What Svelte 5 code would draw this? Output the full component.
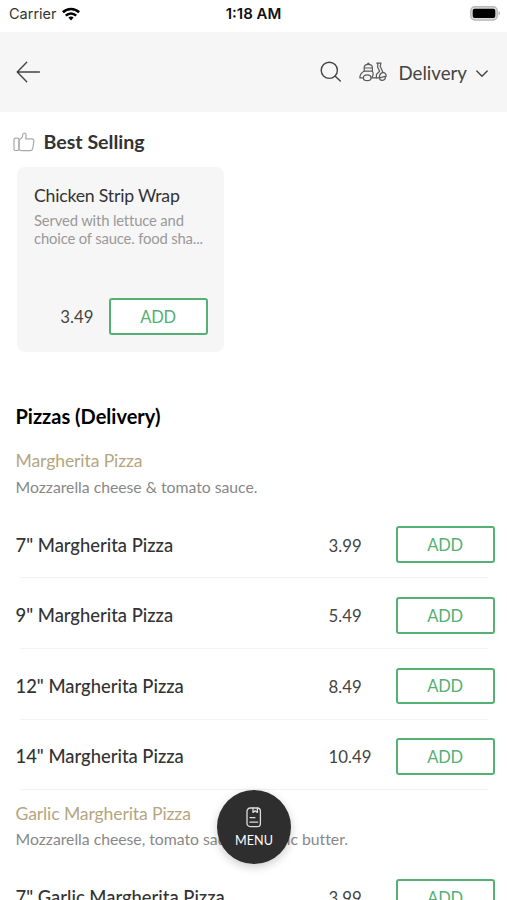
<script lang="ts">
  type Item = { name: string; price: string };
  type Group = { title: string; description: string; items: Item[] };

  let groups: Group[] = [
    {
      title: "Margherita Pizza",
      description: "Mozzarella cheese & tomato sauce.",
      items: [
        { name: '7" Margherita Pizza', price: "3.99" },
        { name: '9" Margherita Pizza', price: "5.49" },
        { name: '12" Margherita Pizza', price: "8.49" },
        { name: '14" Margherita Pizza', price: "10.49" },
      ],
    },
    {
      title: "Garlic Margherita Pizza",
      description: "Mozzarella cheese, tomato sauce & garlic butter.",
      items: [{ name: '7" Garlic Margherita Pizza', price: "3.99" }],
    },
  ];
</script>

<div class="screen">
  <div class="status">
    <div class="carrier">
      <span>Carrier</span>
      <svg width="18" height="14" viewBox="0 0 18 14" fill="none" stroke="#000" stroke-width="2.6">
        <path d="M0.9 5.2C5.5 0.9 12.5 0.9 17.1 5.2" />
        <path d="M3.8 8.6C6.8 5.7 11.2 5.7 14.2 8.6" />
        <path d="M6.4 10.6C7.9 9.2 10.1 9.2 11.6 10.6L9 13.4Z" fill="#000" stroke="none" />
      </svg>
    </div>
    <span class="time">1:18 AM</span>
    <svg class="battery" width="31" height="15" viewBox="0 0 31 15">
      <rect x="0.8" y="0.8" width="26.4" height="13.2" rx="4" fill="#ddd" stroke="#b8b8b8" stroke-width="1.4" />
      <rect x="2.7" y="2.7" width="22.6" height="9.4" rx="2" fill="#000" />
      <path d="M28.5 5.3C30.5 6 30.5 8.8 28.5 9.5Z" fill="#b3b3b3" />
    </svg>
  </div>

  <header>
    <button class="back" aria-label="Back">
      <svg width="26" height="24" viewBox="0 0 26 24" fill="none" stroke="#444" stroke-width="1.4" stroke-linecap="round" stroke-linejoin="round">
        <path d="M24.4 12H2.2M11.7 2.3L2.2 12L11.7 21.7" />
      </svg>
    </button>
    <button class="search" aria-label="Search">
      <svg width="22" height="22" viewBox="0 0 22 22" fill="none" stroke="#444" stroke-width="1.4" stroke-linecap="round">
        <circle cx="9.3" cy="9.3" r="8.1" />
        <path d="M15.2 15.2L20.3 20.1" />
      </svg>
    </button>
    <button class="mode">
      <svg width="28" height="20" viewBox="0 0 28 20" fill="none" stroke="#5a5a5a" stroke-width="1.2" stroke-linecap="round" stroke-linejoin="round">
        <path d="M5.2 9.2V5.8C5.2 3.6 6.6 2.4 9.3 2.4S13.4 3.6 13.4 5.8V9.2ZM5.2 6H13.4M8.2 2.2L9.3 1.2L10.4 2.2" />
        <path d="M5.2 9.2C2.4 10.4 0.9 12.8 0.9 15.9H4.4M13.4 9.2C14.6 11.4 14.2 13.9 12.4 15.9H20.4" />
        <path d="M4.4 15.9C4.4 11.8 12 11.8 12 15.9C12 19.4 4.4 19.4 4.4 15.9Z" />
        <path d="M17.8 1.2H22L21.2 4.2L24 10.4C26.2 10.8 27.2 12.5 27.2 14.2L20.4 15.9C20.2 13 21.6 11 24 10.4" />
        <path d="M18.9 1.2L18.6 5.1L20.6 9.3L17.4 12.4V15.9" />
        <path d="M20.4 15.9C20.8 19.4 26.4 19.2 26.5 14.8" />
      </svg>
      <span>Delivery</span>
      <svg class="chevron" width="14" height="10" viewBox="0 0 14 10" fill="none" stroke="#444" stroke-width="1.4" stroke-linecap="round" stroke-linejoin="round">
        <path d="M1.8 2L7 7.2L12.2 2" />
      </svg>
    </button>
  </header>

  <main>
    <h2 class="best">
      <svg width="22" height="20" viewBox="0 0 22 20" fill="none" stroke="#aaa" stroke-width="1.2" stroke-linejoin="round">
        <rect x="1" y="6.2" width="5" height="12.3" rx="1.2" />
        <path d="M6 8.2L8.8 5.8C9.6 4.9 9.7 3.8 9.8 2.4C9.9 0.6 13.2 0.4 13.2 3.4C13.2 4.6 12.8 5.8 12.5 6.8H18.5C20.5 6.8 21.2 8 20.9 9.5L19.8 16C19.5 17.8 18.6 18.7 16.9 18.7H8.8C7.2 18.7 6 17.8 6 16.5Z" />
      </svg>
      Best Selling
    </h2>

    <div class="card">
      <h3>Chicken Strip Wrap</h3>
      <p>Served with lettuce and<br />choice of sauce. food sha...</p>
      <div class="buy">
        <span class="price">3.49</span>
        <button class="add">ADD</button>
      </div>
    </div>

    <h2 class="category">Pizzas (Delivery)</h2>

    {#each groups as group}
      <section>
        <div class="intro">
          <h3>{group.title}</h3>
          <p>{group.description}</p>
        </div>
        {#each group.items as item}
          <div class="item">
            <span class="name">{item.name}</span>
            <span class="price">{item.price}</span>
            <button class="add">ADD</button>
          </div>
        {/each}
      </section>
    {/each}
  </main>

  <button class="menu">
    <svg width="16" height="21" viewBox="0 0 16 21" fill="none" stroke="#ddd" stroke-width="1.3" stroke-linecap="round" stroke-linejoin="round">
      <rect x="1" y="1" width="13.4" height="18.6" rx="3.2" />
      <path d="M7 1V5.4L9.2 3.9L11.4 5.4V1M4 10.6H9M4 15.2H11.6" />
    </svg>
    <span>MENU</span>
  </button>
</div>

<style>
  :global(body) {
    margin: 0;
    overflow: hidden;
  }
  .screen {
    position: relative;
    width: 507px;
    height: 900px;
    overflow: hidden;
    background: #fff;
    color: #333;
    font-family: Lato, sans-serif;
  }
  h2,
  h3,
  p {
    margin: 0;
  }
  button {
    padding: 0;
    border: none;
    background: none;
    color: inherit;
    font-family: inherit;
  }
  svg {
    display: block;
    flex: none;
  }

  .status {
    display: grid;
    grid-template-columns: 1fr auto 1fr;
    align-items: center;
    box-sizing: border-box;
    height: 32px;
    padding: 0 6px 5px 9px;
    color: #111;
    font: 14.5px/18px Inter, sans-serif;
  }
  .carrier {
    display: flex;
    align-items: center;
    gap: 5px;
    color: #333;
  }
  .time {
    margin-right: 3px;
    font-weight: 600;
    font-size: 15px;
  }
  .battery {
    justify-self: end;
  }

  header {
    display: flex;
    align-items: center;
    height: 80px;
    padding: 0 18px 0 14.5px;
    background: #f6f6f6;
  }
  .back {
    margin-right: auto;
  }
  .search {
    margin-right: 17.5px;
  }
  .mode {
    display: flex;
    align-items: center;
    color: #444;
    font-size: 18.7px;
    line-height: 24px;
  }
  .mode span {
    margin: 1px 8px 0 11px;
  }
  .chevron {
    margin-top: 3px;
  }

  .best {
    display: flex;
    align-items: center;
    gap: 8.5px;
    padding: 18px 0 0 13px;
    font-size: 19.6px;
    line-height: 24px;
  }
  .card {
    display: flex;
    flex-direction: column;
    box-sizing: border-box;
    width: 207.5px;
    height: 185px;
    margin: 13px 0 0 16.7px;
    padding: 16.5px 16.7px 17.5px 17.3px;
    border-radius: 8px;
    background: #f6f6f6;
  }
  .card h3 {
    font-weight: 400;
    font-size: 17.7px;
    line-height: 24px;
    letter-spacing: -0.22px;
  }
  .card p {
    margin-top: 4.5px;
    color: #999;
    font-size: 14.8px;
    line-height: 17.6px;
    letter-spacing: -0.15px;
    white-space: nowrap;
  }
  .buy {
    display: flex;
    align-items: center;
    justify-content: flex-end;
    gap: 15px;
    margin-top: auto;
  }
  .price {
    padding-top: 1px;
    color: #444;
    font-size: 16.8px;
  }
  .add {
    box-sizing: border-box;
    width: 99px;
    height: 36.5px;
    padding-top: 1px;
    border: 2px solid #55b073;
    border-radius: 3px;
    background: #fff;
    color: #55b073;
    font-size: 16.5px;
    letter-spacing: -0.3px;
  }

  .category {
    padding: 52px 0 9.6px 15.5px;
    color: #000;
    font-size: 20px;
    line-height: 24px;
  }
  .intro {
    box-sizing: border-box;
    height: 70.3px;
    padding: 11.5px 15.5px 0;
  }
  .intro h3 {
    color: #b5a57f;
    font-weight: 400;
    font-size: 17.6px;
    line-height: 24px;
    letter-spacing: -0.12px;
  }
  .intro p {
    margin-top: 2.5px;
    color: #888;
    font-size: 15.8px;
    line-height: 22px;
    letter-spacing: -0.03px;
  }
  .item {
    display: grid;
    grid-template-columns: 313px 67px 99px;
    align-items: center;
    box-sizing: border-box;
    height: 70.6px;
    padding: 3px 12px 0 15.5px;
    background: linear-gradient(#f3f3f3, #f3f3f3) 20px 100% / 468px 1px no-repeat;
  }
  .name {
    font-weight: 500;
    font-size: 18.4px;
  }

  .menu {
    position: absolute;
    top: 790px;
    left: 217px;
    display: flex;
    flex-direction: column;
    align-items: center;
    box-sizing: border-box;
    width: 74px;
    height: 74px;
    padding-top: 17px;
    border-radius: 50%;
    background: #2e2e2e;
    box-shadow: 0 3px 10px rgba(0, 0, 0, 0.2);
    color: #fff;
  }
  .menu span {
    margin-top: 5px;
    font-size: 12.6px;
    line-height: 16px;
  }
</style>
